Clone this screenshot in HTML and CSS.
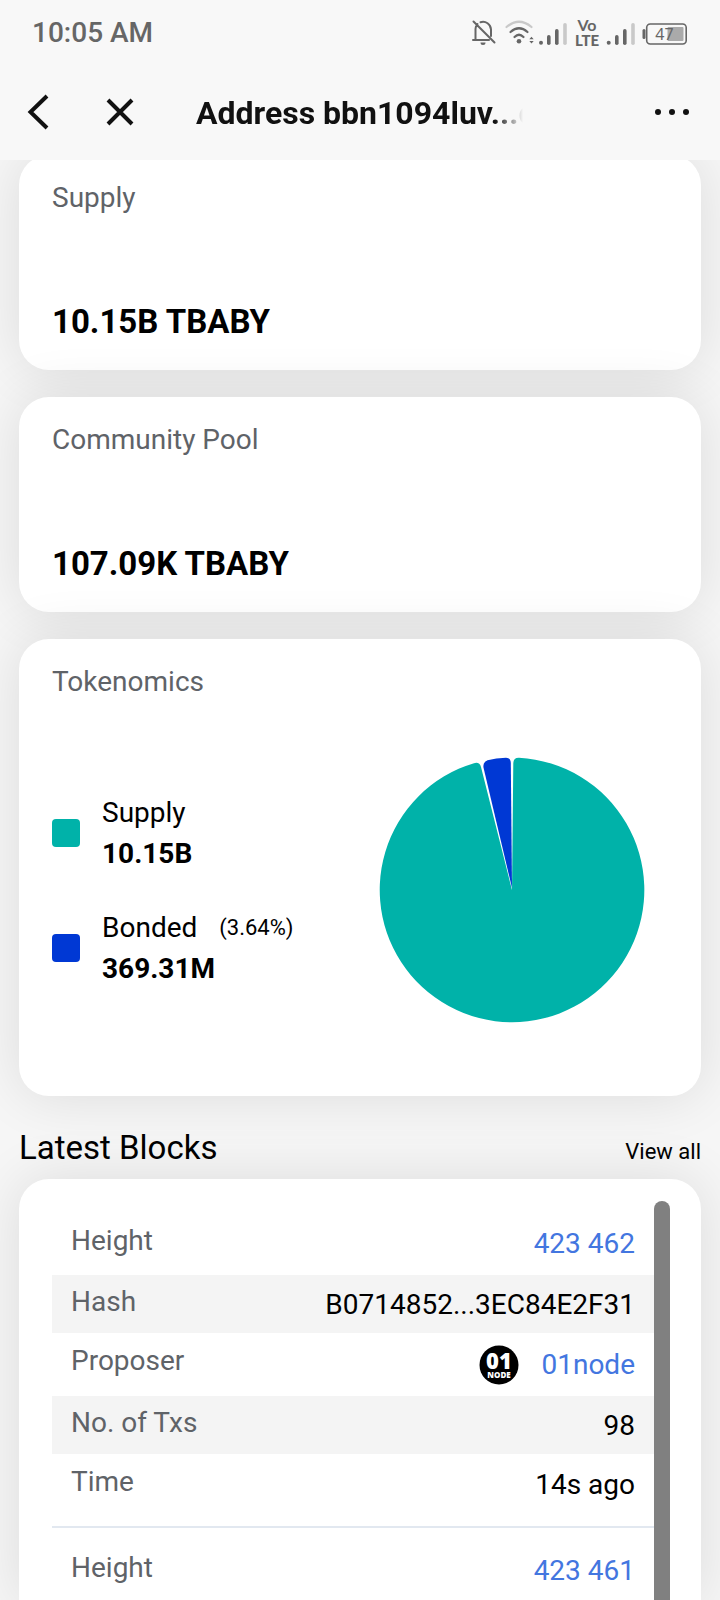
FILE: index.html
```html
<!DOCTYPE html>
<html lang="en">
<head>
<meta charset="utf-8">
<meta name="viewport" content="width=device-width, initial-scale=1">
<title>Address bbn1094luv...</title>
<link rel="stylesheet" href="styles.css">
</head>
<body>
<div class="screen">
  <header class="top">
    <div class="status">
      <span class="clock">10:05 AM</span>
      <svg class="status-icons" viewBox="470 15 220 34" role="img" aria-label="Muted, Wi-Fi, signal, battery 47 percent">
        <g fill="none" stroke="#666" stroke-width="2" stroke-linecap="round">
          <path d="M475.5 38V28a8 8 0 0 1 2-5M480.500 21.200a8 8 0 0 1 10.500 7.300V35M473 39H489M473.500 20.500L494.500 41.500"/>
          <path d="M506.500 26Q519 15.500 531.500 26" stroke="#c9c9c9" stroke-width="2.200"/>
          <path d="M510.500 31Q519 23.500 527.500 31M514.500 36Q519 31.500 523.500 36" stroke-width="2.200"/>
        </g>
        <g fill="#666">
          <path d="M480.500 41.500h5a2.500 2.500 0 0 1-5 0z"/>
          <circle cx="519" cy="40.300" r="2.300"/>
          <path d="M529.300 38.300l2.200-2.600 2.200 2.600zM529.300 40l2.200 2.600 2.200-2.600z"/>
          <circle cx="541" cy="41.700" r="2"/>
          <rect x="547" y="34" width="3.600" height="10" rx="1.800"/>
          <rect x="555" y="28" width="3.600" height="16" rx="1.800"/>
          <circle cx="608.700" cy="41.700" r="2"/>
          <rect x="615" y="34" width="3.600" height="10" rx="1.800"/>
          <rect x="623" y="28" width="3.600" height="16" rx="1.800"/>
          <rect x="642.500" y="28" width="3" height="10" rx="1.500"/>
        </g>
        <rect x="563.200" y="22" width="3.600" height="22" rx="1.800" fill="#c9c9c9"/>
        <rect x="631.200" y="22" width="3.600" height="22" rx="1.800" fill="#c9c9c9"/>
        <rect x="646.700" y="23" width="39.500" height="20" rx="3.500" fill="none" stroke="#666" stroke-width="1.600"/>
        <rect x="667.500" y="26" width="16" height="14" rx="1" fill="#aaa"/>
        <text class="volte" x="587" y="30" text-anchor="middle">Vo</text>
        <text class="volte lte" x="587" y="45" text-anchor="middle">LTE</text>
        <text class="charge" x="664.500" y="38.500" text-anchor="middle">47</text>
      </svg>
    </div>
    <nav class="nav">
      <button class="icon-btn back" type="button" aria-label="Back">
        <svg width="22" height="36" viewBox="0 0 22 36"><path d="M20 2L3.500 18 20 34" fill="none" stroke="#111" stroke-width="4"/></svg>
      </button>
      <button class="icon-btn close" type="button" aria-label="Close">
        <svg width="28" height="28" viewBox="0 0 28 28"><path d="M2 2L26 26M26 2L2 26" fill="none" stroke="#111" stroke-width="4"/></svg>
      </button>
      <h1 class="title">Address bbn1094luv...c</h1>
      <button class="icon-btn more" type="button" aria-label="More">
        <svg width="36" height="8" viewBox="0 0 36 8" fill="#111"><circle cx="4" cy="4" r="3"/><circle cx="18" cy="4" r="3"/><circle cx="32" cy="4" r="3"/></svg>
      </button>
    </nav>
  </header>

  <main class="content">
    <section class="card stat first">
      <h2 class="label">Supply</h2>
      <p class="amount">10.15B TBABY</p>
    </section>
    <section class="card stat">
      <h2 class="label">Community Pool</h2>
      <p class="amount">107.09K TBABY</p>
    </section>
    <section class="card tokenomics">
      <h2 class="label">Tokenomics</h2>
      <div class="chart-row">
        <ul class="legend">
          <li class="legend-item">
            <span class="swatch teal"></span>
            <div>
              <p class="legend-name">Supply</p>
              <p class="legend-value">10.15B</p>
            </div>
          </li>
          <li class="legend-item">
            <span class="swatch blue"></span>
            <div>
              <p class="legend-name">Bonded <small class="share">(3.64%)</small></p>
              <p class="legend-value">369.31M</p>
            </div>
          </li>
        </ul>
        <svg class="pie" viewBox="-133 -133 266 266" role="img" aria-label="Supply and bonded share">
          <path fill="#00b2a9" d="M0 0L1.300-127Q1.500-132.300 7-132.200A132.300 132.300 0 1 1-38-126.800Q-32.500-128.300-31-123Z"/>
          <path fill="#0038d4" d="M0-2L-28.400-122Q-29.500-127.500-24.500-129.800Q-16-132-6-132.300Q-1.300-132.200-1.200-127Z"/>
        </svg>
      </div>
    </section>

    <div class="section-head">
      <h2 class="section-title">Latest Blocks</h2>
      <a class="view-all" href="#blocks">View all</a>
    </div>

    <section class="card blocks" id="blocks">
      <div class="block-list">
        <table class="block">
          <tr class="lead"><th scope="row">Height</th><td><a href="#b462">423 462</a></td></tr>
          <tr class="shade"><th scope="row">Hash</th><td>B0714852...3EC84E2F31</td></tr>
          <tr class="proposer"><th scope="row">Proposer</th><td>
            <div class="node">
              <svg class="node-logo" viewBox="0 0 40 40" aria-hidden="true">
                <circle cx="20" cy="20" r="19.500"/>
                <text class="logo-num" x="20" y="24" text-anchor="middle">01</text>
                <text class="logo-word" x="20" y="32.500" text-anchor="middle">NODE</text>
              </svg>
              <a href="#node">01node</a>
            </div></td></tr>
          <tr class="shade"><th scope="row">No. of Txs</th><td>98</td></tr>
          <tr class="last"><th scope="row">Time</th><td>14s ago</td></tr>
        </table>
        <table class="block">
          <tr class="lead"><th scope="row">Height</th><td><a href="#b461">423 461</a></td></tr>
        </table>
      </div>
      <div class="scrollbar"></div>
    </section>
  </main>
</div>
</body>
</html>
```

FILE: styles.css
```css
* {
  box-sizing: border-box;
}

body,
h1,
h2,
p,
ul {
  margin: 0;
  padding: 0;
}

body {
  background: #f6f6f6;
  color: #000;
  font-family: Roboto, "Liberation Sans", sans-serif;
  font-size: 28px;
  line-height: 32px;
}

a {
  color: #4376e0;
  text-decoration: none;
}

.screen {
  display: flex;
  flex-direction: column;
  height: 100vh;
  overflow: hidden;
}

.top {
  flex: none;
  background: #f8f8f8;
}

.status {
  display: flex;
  align-items: center;
  justify-content: space-between;
  height: 66px;
  padding: 0 30px 0 32px;
}

.clock {
  color: #666;
  font-size: 28px;
  font-weight: 500;
}

.status-icons {
  width: 220px;
  height: 34px;
}

.volte {
  fill: #666;
  font-family: Lato, sans-serif;
  font-size: 16px;
  font-weight: 700;
}

.lte {
  font-size: 15px;
  font-weight: 900;
}

.charge {
  fill: #666;
  font-family: "Noto Sans", sans-serif;
  font-size: 16px;
}

.nav {
  display: flex;
  align-items: center;
  height: 94px;
  padding: 0 30px 2px 27px;
}

.icon-btn {
  display: flex;
  padding: 0;
  border: 0;
  background: none;
}

.close {
  margin: 0 62px 0 57px;
}

.title {
  width: 327px;
  padding-top: 2px;
  overflow: hidden;
  color: #111;
  font-size: 32px;
  font-weight: 700;
  line-height: 38px;
  white-space: nowrap;
  -webkit-mask-image: linear-gradient(to left, transparent, #000 28px);
  mask-image: linear-gradient(to left, transparent, #000 28px);
}

.more {
  margin-left: auto;
}

.content {
  display: flex;
  flex: 1;
  flex-direction: column;
  min-height: 0;
  padding: 0 19px;
  overflow: hidden;
}

.card {
  flex: none;
  padding: 27px 33px 29px;
  border-radius: 30px;
  background: #fff;
  box-shadow: 0 0 56px rgba(0, 0, 0, 0.11);
}

.stat {
  display: flex;
  flex-direction: column;
  justify-content: space-between;
  min-height: 215px;
  margin-bottom: 27px;
}

.first {
  margin-top: -5px;
}

.label {
  color: #5f6368;
  font-size: 28px;
  font-weight: 400;
}

.amount {
  font-size: 33px;
  font-weight: 700;
  line-height: 38px;
}

.tokenomics {
  padding-bottom: 14px;
}

.chart-row {
  display: flex;
  align-items: center;
  justify-content: space-between;
  min-height: 384px;
  padding-right: 23px;
}

.legend {
  display: flex;
  flex-direction: column;
  gap: 33px;
  list-style: none;
}

.legend-item {
  display: flex;
  align-items: center;
  gap: 22px;
  line-height: 41px;
}

.swatch {
  width: 28px;
  height: 28px;
  border-radius: 4px;
}

.teal {
  background: #00b2a9;
}

.blue {
  background: #0038d4;
}

.legend-name {
  display: flex;
  align-items: center;
  gap: 22px;
}

.legend-value {
  font-weight: 700;
}

.share {
  font-size: 22px;
}

.pie {
  width: 266px;
  height: 266px;
}

.section-head {
  display: flex;
  flex: none;
  align-items: baseline;
  justify-content: space-between;
  padding: 33px 0 11px;
}

.section-title {
  font-size: 33px;
  font-weight: 400;
  line-height: 38px;
}

.view-all {
  color: #000;
  font-size: 22px;
}

.blocks {
  display: flex;
  flex: 1 0 auto;
  padding: 22px 31px 0 33px;
  border-radius: 30px 30px 0 0;
}

.block-list {
  flex: 1;
}

.block {
  width: 100%;
  border-spacing: 0;
  margin-top: 13px;
}

.block th,
.block td {
  height: 58px;
  padding: 11px 19px 0;
  vertical-align: top;
}

.block th {
  color: #5f6368;
  font-weight: 400;
  text-align: left;
}

.block td {
  padding-top: 14px;
  text-align: right;
}

.block .lead th {
  height: 61px;
}

.block .proposer th {
  height: 63px;
  padding-top: 12px;
}

.block .proposer td {
  padding-top: 12px;
}

.block .last th {
  height: 74px;
  padding-top: 12px;
  border-bottom: 2px solid #e2e8f0;
}

.block .last td {
  padding-top: 15px;
  border-bottom: 2px solid #e2e8f0;
}

.shade {
  background: #f4f4f4;
}

.node {
  display: flex;
  align-items: center;
  justify-content: flex-end;
  gap: 22px;
}

.node-logo {
  width: 40px;
  height: 40px;
}

.logo-num,
.logo-word {
  fill: #fff;
  font-family: "Open Sans", sans-serif;
  font-weight: 800;
}

.logo-num {
  font-size: 22px;
}

.logo-word {
  font-size: 8px;
}

.scrollbar {
  width: 16px;
  border-radius: 8px 8px 0 0;
  background: #808080;
}
```
